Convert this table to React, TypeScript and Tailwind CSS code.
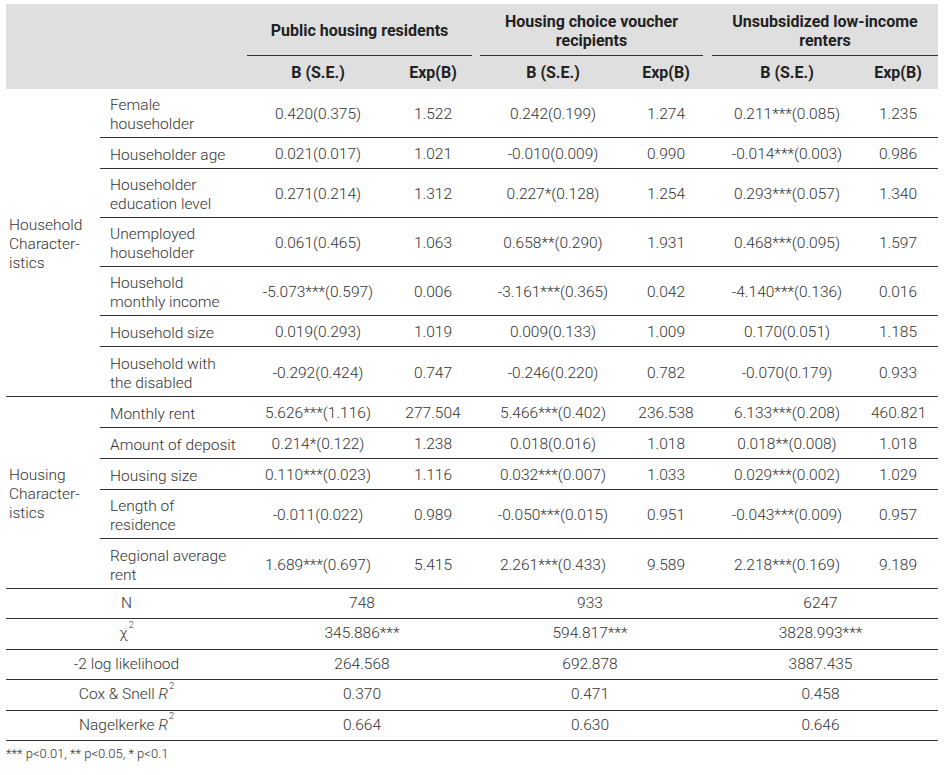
import React from "react"

type Row = { label: string[]; cells: string[] }

const groups: { name: string[]; rows: Row[] }[] = [
  {
    name: ["Household", "Character-", "istics"],
    rows: [
      { label: ["Female", "householder"], cells: ["0.420(0.375)", "1.522", "0.242(0.199)", "1.274", "0.211***(0.085)", "1.235"] },
      { label: ["Householder age"], cells: ["0.021(0.017)", "1.021", "-0.010(0.009)", "0.990", "-0.014***(0.003)", "0.986"] },
      { label: ["Householder", "education level"], cells: ["0.271(0.214)", "1.312", "0.227*(0.128)", "1.254", "0.293***(0.057)", "1.340"] },
      { label: ["Unemployed", "householder"], cells: ["0.061(0.465)", "1.063", "0.658**(0.290)", "1.931", "0.468***(0.095)", "1.597"] },
      { label: ["Household", "monthly income"], cells: ["-5.073***(0.597)", "0.006", "-3.161***(0.365)", "0.042", "-4.140***(0.136)", "0.016"] },
      { label: ["Household size"], cells: ["0.019(0.293)", "1.019", "0.009(0.133)", "1.009", "0.170(0.051)", "1.185"] },
      { label: ["Household with", "the disabled"], cells: ["-0.292(0.424)", "0.747", "-0.246(0.220)", "0.782", "-0.070(0.179)", "0.933"] },
    ],
  },
  {
    name: ["Housing", "Character-", "istics"],
    rows: [
      { label: ["Monthly rent"], cells: ["5.626***(1.116)", "277.504", "5.466***(0.402)", "236.538", "6.133***(0.208)", "460.821"] },
      { label: ["Amount of deposit"], cells: ["0.214*(0.122)", "1.238", "0.018(0.016)", "1.018", "0.018**(0.008)", "1.018"] },
      { label: ["Housing size"], cells: ["0.110***(0.023)", "1.116", "0.032***(0.007)", "1.033", "0.029***(0.002)", "1.029"] },
      { label: ["Length of", "residence"], cells: ["-0.011(0.022)", "0.989", "-0.050***(0.015)", "0.951", "-0.043***(0.009)", "0.957"] },
      { label: ["Regional average", "rent"], cells: ["1.689***(0.697)", "5.415", "2.261***(0.433)", "9.589", "2.218***(0.169)", "9.189"] },
    ],
  },
]

// widths of the six value columns (last one keeps some room on the right)
const colW = ["w-[142px]", "w-[88px]", "w-[152px]", "w-[74px]", "w-[168px]", "w-[67px] pr-[13px]"]
const groupW = ["w-[230px]", "w-[226px]", "w-[235px]"]

function Stat({ label, values }: { label: React.ReactNode; values: string[] }) {
  return (
    <div className="flex h-[30.4px] items-center border-b border-[#333]">
      <div className="w-[241px] text-center">{label}</div>
      {values.map((v, i) => (
        <div key={i} className={`${groupW[i]} text-center`}>
          {v}
        </div>
      ))}
    </div>
  )
}

const Sq = () => <sup className="text-[9px] align-[6px] ml-[1px]">2</sup>

export default function App() {
  const heads = [
    { title: ["Public housing residents"], line: "ml-0 mr-[5px]" },
    { title: ["Housing choice voucher", "recipients"], line: "ml-[3px] mr-0" },
    { title: ["Unsubsidized low-income", "renters"], line: "ml-[9px] mr-0" },
  ]

  return (
    <div
      className="w-[947px] h-[775px] bg-white pt-[4px] pl-[6px] text-[15.5px] font-light text-[#333]"
      style={{ fontFamily: "Roboto, 'Liberation Sans', sans-serif" }}
    >
      <div className="w-[932px]">
        {/* header */}
        <div className="flex h-[85px] bg-[#dfdfdf] font-bold text-[#222] text-[16px]">
          <div className="w-[241px]" />
          {heads.map((h, gi) => (
            <div key={gi} className={`${groupW[gi]} flex flex-col`}>
              <div className={`h-[52px] pt-[2px] flex flex-col items-center justify-center leading-[19px] border-b border-[#333] ${h.line}`}>
                {h.title.map((t) => (
                  <div key={t}>{t}</div>
                ))}
              </div>
              <div className="flex h-[33px] pt-[1px] items-center">
                <div className={`${colW[gi * 2]} text-center`}>B (S.E.)</div>
                <div className={`${colW[gi * 2 + 1]} text-center`}>Exp(B)</div>
              </div>
            </div>
          ))}
        </div>

        {/* body groups */}
        {groups.map((g) => (
          <div key={g.name[0]} className="flex border-b border-[#333]">
            <div className="w-[94px] pl-[3px] pt-[4px] flex flex-col justify-center leading-[19px]">
              {g.name.map((n) => (
                <div key={n}>{n}</div>
              ))}
            </div>
            <div className="flex flex-col">
              {g.rows.map((r, ri) => (
                <div
                  key={r.label.join(" ")}
                  className={`flex items-center pt-[4px] ${r.label.length > 1 ? "h-[49px]" : "h-[31px]"} ${
                    ri < g.rows.length - 1 ? "border-b border-[#333]" : ""
                  }`}
                >
                  <div className="w-[147px] pl-[10px] leading-[19px]">
                    {r.label.map((l) => (
                      <div key={l}>{l}</div>
                    ))}
                  </div>
                  {r.cells.map((c, ci) => (
                    <div key={ci} className={`${colW[ci]} text-center`}>
                      {c}
                    </div>
                  ))}
                </div>
              ))}
            </div>
          </div>
        ))}

        {/* model statistics */}
        <Stat label="N" values={["748", "933", "6247"]} />
        <Stat
          label={
            <span>
              χ<Sq />
            </span>
          }
          values={["345.886***", "594.817***", "3828.993***"]}
        />
        <Stat label="-2 log likelihood" values={["264.568", "692.878", "3887.435"]} />
        <Stat
          label={
            <span>
              Cox &amp; Snell <i>R</i>
              <Sq />
            </span>
          }
          values={["0.370", "0.471", "0.458"]}
        />
        <Stat
          label={
            <span>
              Nagelkerke <i>R</i>
              <Sq />
            </span>
          }
          values={["0.664", "0.630", "0.646"]}
        />

        <div className="pt-[3px] text-[13px]">*** p&lt;0.01, ** p&lt;0.05, * p&lt;0.1</div>
      </div>
    </div>
  )
}
